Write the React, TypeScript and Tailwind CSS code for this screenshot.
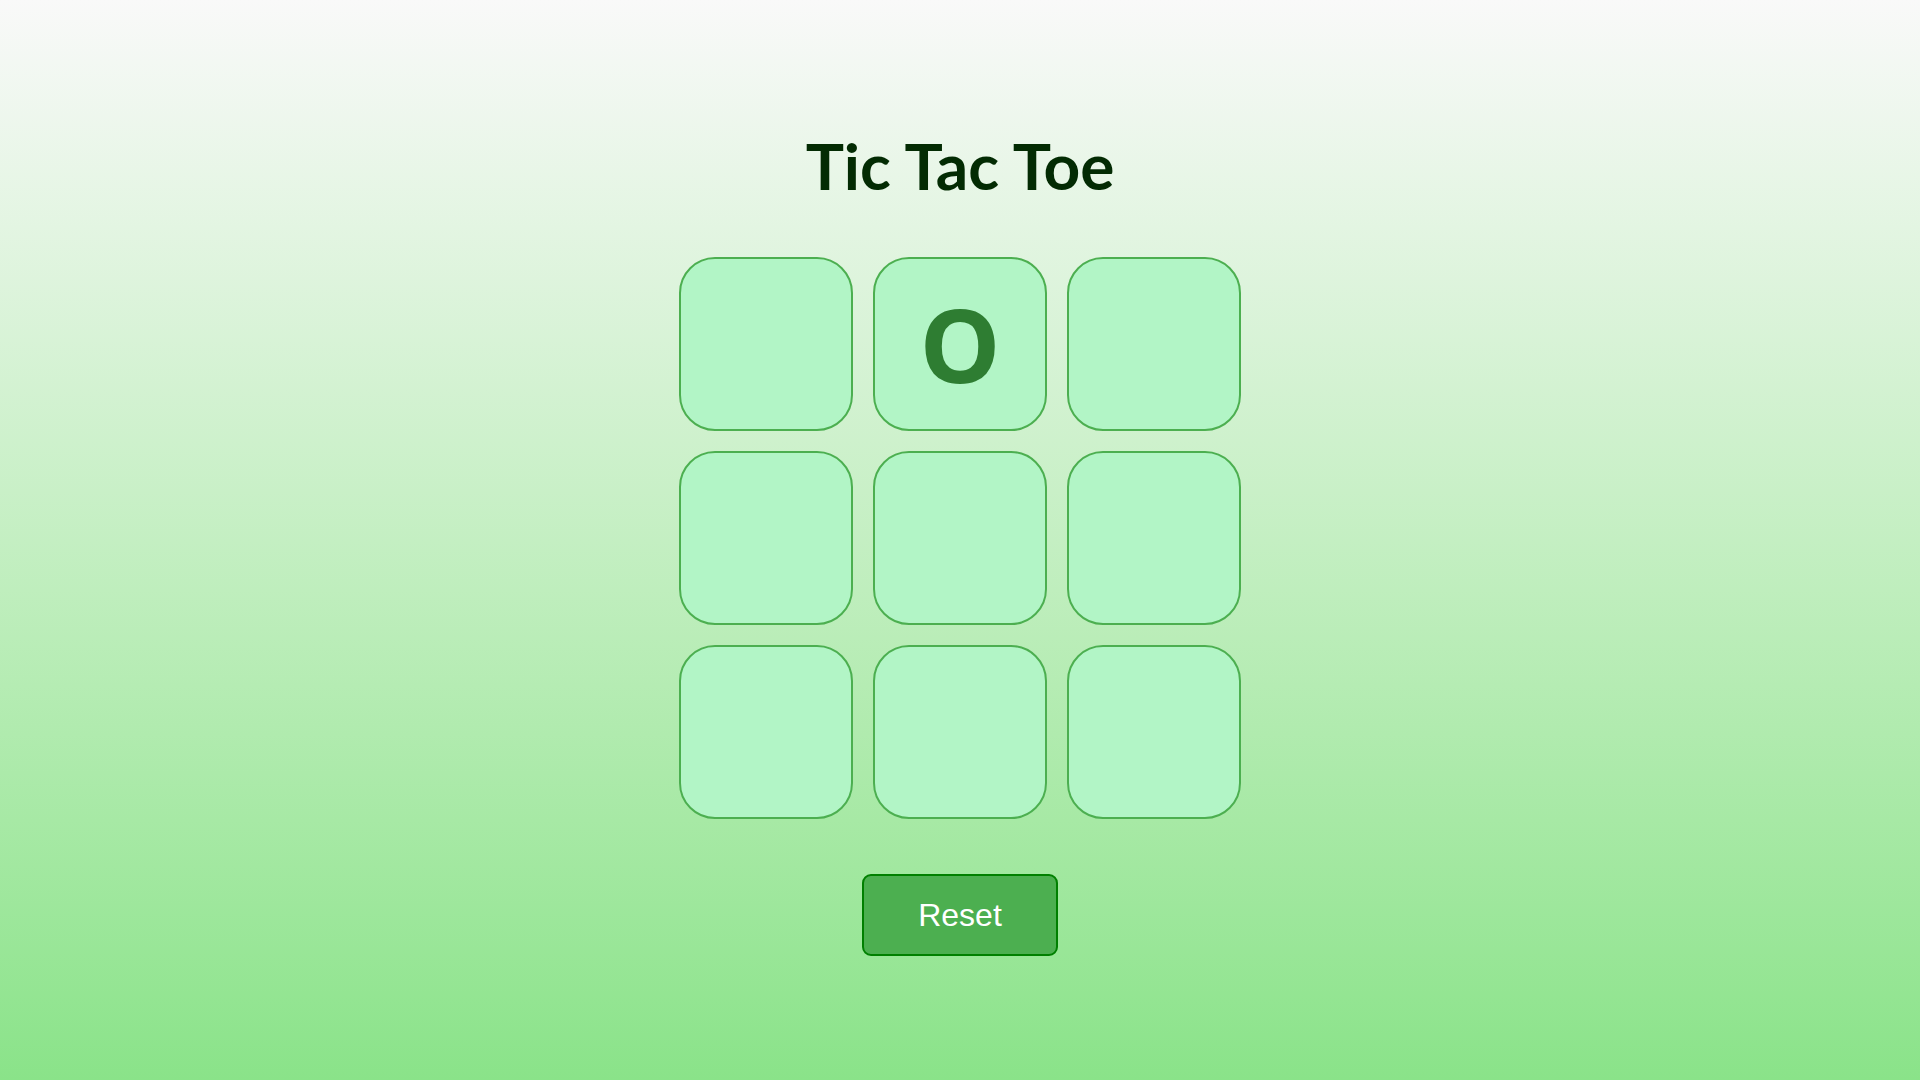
import { useState } from "react";

type Mark = "X" | "O" | null;

export default function App() {
  const [board, setBoard] = useState<Mark[]>([null, "O", null, null, null, null, null, null, null]);

  return (
    <main className="min-h-screen w-full flex flex-col items-center bg-gradient-to-b from-[#f9f9f9] to-[#8ae389] pt-[134px]">
      <h1 className="text-[64px] leading-[64px] font-bold text-[#032b03] font-['Lato',sans-serif]">
        Tic Tac Toe
      </h1>

      {/* Board */}
      <div className="mt-[59px] grid grid-cols-[repeat(3,173.5px)] gap-[20.5px]">
        {board.map((cell, i) => (
          <button
            key={i}
            onClick={() => {
              const next = [...board];
              next[i] = next[i] ? next[i] : "X";
              setBoard(next);
            }}
            className="w-[173.5px] h-[173.5px] rounded-[36px] border-2 border-[#4caf50] bg-[#b2f5c6] flex items-center justify-center text-[102px] font-bold text-[#2e7d32] font-['Noto_Sans',sans-serif] leading-none"
          >
            {cell}
          </button>
        ))}
      </div>

      <button
        onClick={() => setBoard(Array(9).fill(null))}
        className="mt-[55px] px-[54px] py-[20px] border-2 border-[#008000] rounded-[9px] bg-[#4caf50] text-white text-[32px] leading-[38px] font-['Liberation_Sans',Arial,sans-serif]"
      >
        Reset
      </button>
    </main>
  );
}
